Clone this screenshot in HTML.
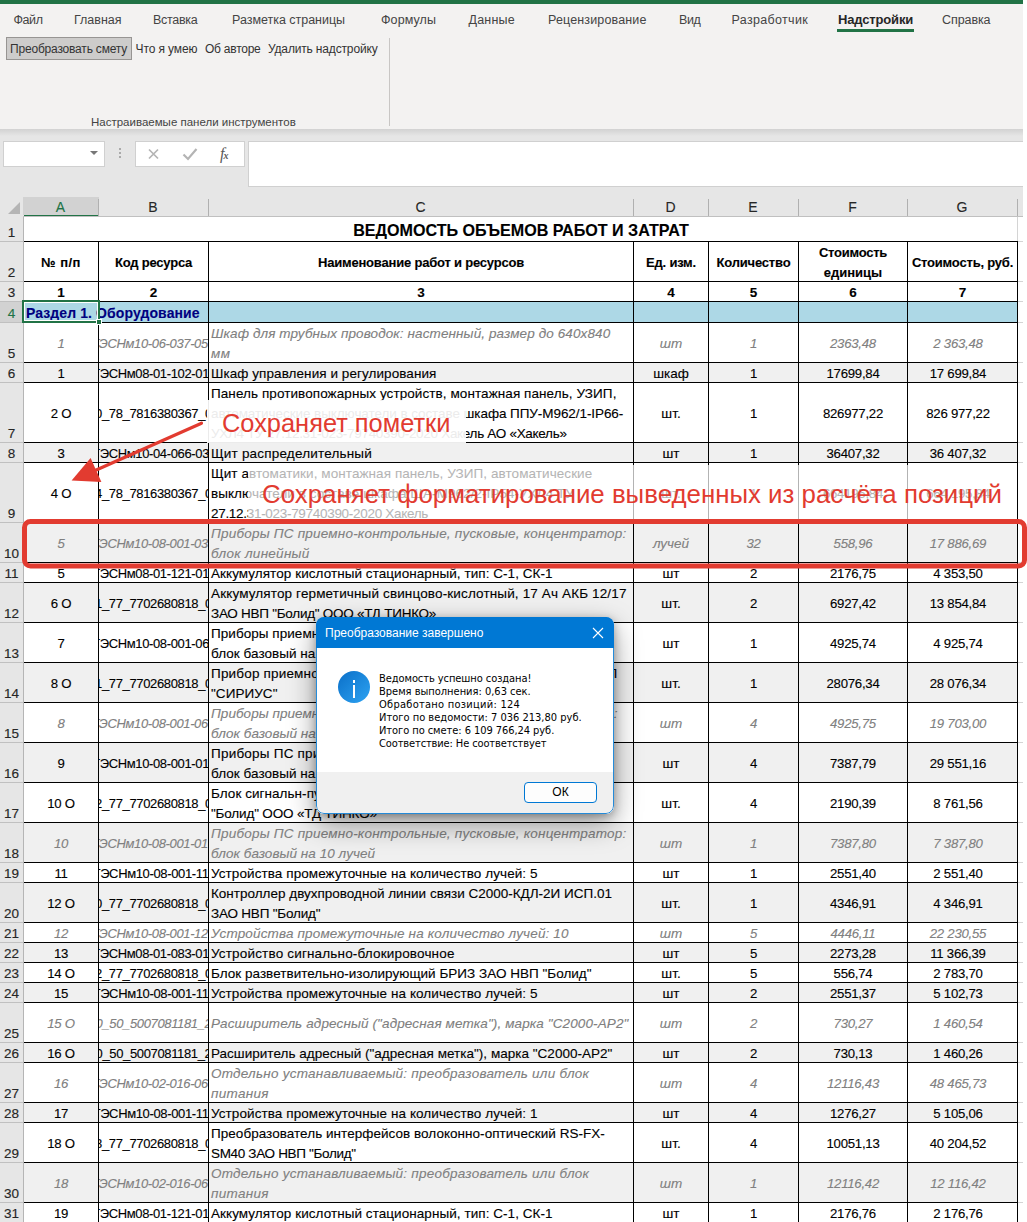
<!DOCTYPE html>
<html lang="ru"><head><meta charset="utf-8"><title>Ведомость объемов работ и затрат</title>
<style>
*{box-sizing:border-box;margin:0;padding:0}
html,body{width:1027px;height:1222px;overflow:hidden;background:#fff}
body{position:relative;font-family:"Liberation Sans",sans-serif;font-size:13.5px;color:#000}
.abs{position:absolute}
.t{position:absolute;white-space:nowrap;line-height:20px;height:20px;-webkit-text-stroke:0.12px}
.c{text-align:center}
.g{color:#808080;font-style:italic}
.b{font-weight:bold}
.rh{position:absolute;left:0;width:23px;text-align:center;font-size:13.5px;color:#1a1a1a;line-height:18px;-webkit-text-stroke:0.15px}
.ch{position:absolute;top:198px;height:18px;line-height:19px;text-align:center;font-size:14px;color:#1a1a1a;-webkit-text-stroke:0.1px}
.hl{position:absolute;background:#000;height:1px}
.vl{position:absolute;background:#000;width:1px}
.num{font-size:13.2px;letter-spacing:-0.25px}
.tab{position:absolute;top:10px;height:20px;line-height:20px;font-size:13px;color:#444;white-space:nowrap}
.rb{position:absolute;top:39px;height:20px;line-height:20px;font-size:12.5px;color:#333;white-space:nowrap}
</style></head><body>

<div class="abs" style="left:0;top:0;width:1027px;height:130px;background:#f3f2f1"></div>
<div class="abs" style="left:0;top:0;width:1027px;height:4px;background:#217346"></div>
<div class="abs" style="left:0;top:130px;width:1027px;height:68px;background:#e6e6e6"></div>
<div class="abs" style="left:0;top:129px;width:1027px;height:7px;background:linear-gradient(#d2d2d2,#e6e6e6)"></div>
<div class="tab" style="left:13.5px;font-size:12.5px;letter-spacing:-0.43px">Файл</div>
<div class="tab" style="left:74px;font-size:12.5px;letter-spacing:-0.01px">Главная</div>
<div class="tab" style="left:153px;font-size:12.5px;letter-spacing:-0.28px">Вставка</div>
<div class="tab" style="left:232px;font-size:12.5px;letter-spacing:-0.02px">Разметка страницы</div>
<div class="tab" style="left:381px;font-size:12.5px;letter-spacing:0.09px">Формулы</div>
<div class="tab" style="left:468.5px;font-size:12.5px;letter-spacing:0.22px">Данные</div>
<div class="tab" style="left:548px;font-size:12.5px;letter-spacing:0.14px">Рецензирование</div>
<div class="tab" style="left:679px;font-size:12.5px;letter-spacing:-0.38px">Вид</div>
<div class="tab" style="left:731.5px;font-size:12.5px;letter-spacing:0.33px">Разработчик</div>
<div class="tab b" style="left:838px;color:#262626;font-size:13px;letter-spacing:-0.16px">Надстройки</div>
<div class="abs" style="left:837px;top:29px;width:77px;height:3px;background:#217346"></div>
<div class="tab" style="left:942px;font-size:12.5px;letter-spacing:-0.08px">Справка</div>
<div class="abs" style="left:6px;top:37px;width:126px;height:23px;background:#cdcccb;border:1px solid #979593"></div>
<div class="rb" style="left:10px;font-size:12px;letter-spacing:-0.19px">Преобразовать смету</div>
<div class="rb" style="left:135.5px;font-size:12px;letter-spacing:-0.10px">Что я умею</div>
<div class="rb" style="left:205px;font-size:12px;letter-spacing:-0.24px">Об авторе</div>
<div class="rb" style="left:268px;font-size:12px;letter-spacing:-0.16px">Удалить надстройку</div>
<div class="abs" style="left:91px;top:113px;height:18px;line-height:18px;font-size:11.5px;color:#444;white-space:nowrap">Настраиваемые панели инструментов</div>
<div class="abs" style="left:389px;top:38px;width:1px;height:88px;background:#c8c6c4"></div>
<div class="abs" style="left:3px;top:141px;width:102px;height:26px;background:#fff;border:1px solid #d0d0d0"></div>
<div class="abs" style="left:90px;top:151px;width:0;height:0;border-left:4px solid transparent;border-right:4px solid transparent;border-top:4px solid #777"></div>
<div class="abs" style="left:119px;top:148px;width:2px;height:2px;background:#aaa;box-shadow:0 4px 0 #aaa,0 8px 0 #aaa"></div>
<div class="abs" style="left:135px;top:141px;width:110px;height:26px;background:#fff;border:1px solid #d0d0d0"></div>
<svg class="abs" style="left:135px;top:141px" width="110" height="25" viewBox="0 0 110 25"><path d="M14 8.5l9 9M23 8.5l-9 9" stroke="#b4b4b4" stroke-width="1.7" fill="none"/><path d="M48.5 13.5l4.5 4.5 8.5-10" stroke="#b4b4b4" stroke-width="2.2" fill="none"/><text x="85" y="18" font-family="Liberation Serif,serif" font-style="italic" font-size="16" fill="#5a5a5a">f<tspan font-size="10" dx="-1" font-weight="bold">x</tspan></text></svg>
<div class="abs" style="left:248px;top:141px;width:780px;height:46px;background:#fff;border:1px solid #d0d0d0"></div>
<div class="abs" style="left:0;top:197px;width:1027px;height:20px;background:#e6e6e6"></div>
<div class="abs" style="left:8px;top:202px;width:0;height:0;border-left:12px solid transparent;border-bottom:12px solid #b5b5b5"></div>
<div class="abs" style="left:23px;top:197px;width:76px;height:18px;background:#d2d2d2"></div>
<div class="abs" style="left:24px;top:215px;width:75px;height:2px;background:#217346"></div>
<div class="ch" style="left:23px;width:75px;color:#217346">A</div>
<div class="abs" style="left:98px;top:199px;width:1px;height:17px;background:#b0b0b0"></div>
<div class="ch" style="left:98px;width:110px;color:#262626">B</div>
<div class="abs" style="left:208px;top:199px;width:1px;height:17px;background:#b0b0b0"></div>
<div class="ch" style="left:208px;width:425px;color:#262626">C</div>
<div class="abs" style="left:633px;top:199px;width:1px;height:17px;background:#b0b0b0"></div>
<div class="ch" style="left:633px;width:75px;color:#262626">D</div>
<div class="abs" style="left:708px;top:199px;width:1px;height:17px;background:#b0b0b0"></div>
<div class="ch" style="left:708px;width:90px;color:#262626">E</div>
<div class="abs" style="left:798px;top:199px;width:1px;height:17px;background:#b0b0b0"></div>
<div class="ch" style="left:798px;width:109px;color:#262626">F</div>
<div class="abs" style="left:907px;top:199px;width:1px;height:17px;background:#b0b0b0"></div>
<div class="ch" style="left:907px;width:110px;color:#262626">G</div>
<div class="abs" style="left:1017px;top:199px;width:1px;height:17px;background:#b0b0b0"></div>
<div class="abs" style="left:23px;top:216px;width:1004px;height:1px;background:#c0c0c0"></div>
<div class="abs" style="left:0;top:217px;width:23px;height:1005px;background:#e6e6e6"></div>
<div class="abs" style="left:23px;top:217px;width:1px;height:1005px;background:#b5b5b5"></div>
<div class="abs" style="left:0;top:301px;width:23px;height:21px;background:#d2d2d2"></div>
<div class="abs" style="left:22px;top:301px;width:2px;height:21px;background:#217346"></div>
<div class="rh" style="top:224px;color:#262626">1</div>
<div class="abs" style="left:0;top:241px;width:23px;height:1px;background:#c0c0c0"></div>
<div class="rh" style="top:264px;color:#262626">2</div>
<div class="abs" style="left:0;top:281px;width:23px;height:1px;background:#c0c0c0"></div>
<div class="rh" style="top:284px;color:#262626">3</div>
<div class="abs" style="left:0;top:301px;width:23px;height:1px;background:#c0c0c0"></div>
<div class="rh" style="top:305px;color:#217346">4</div>
<div class="abs" style="left:0;top:322px;width:23px;height:1px;background:#c0c0c0"></div>
<div class="rh" style="top:345px;color:#262626">5</div>
<div class="abs" style="left:0;top:362px;width:23px;height:1px;background:#c0c0c0"></div>
<div class="rh" style="top:365px;color:#262626">6</div>
<div class="abs" style="left:0;top:382px;width:23px;height:1px;background:#c0c0c0"></div>
<div class="rh" style="top:425px;color:#262626">7</div>
<div class="abs" style="left:0;top:442px;width:23px;height:1px;background:#c0c0c0"></div>
<div class="rh" style="top:445px;color:#262626">8</div>
<div class="abs" style="left:0;top:462px;width:23px;height:1px;background:#c0c0c0"></div>
<div class="rh" style="top:505px;color:#262626">9</div>
<div class="abs" style="left:0;top:522px;width:23px;height:1px;background:#c0c0c0"></div>
<div class="rh" style="top:545px;color:#262626">10</div>
<div class="abs" style="left:0;top:562px;width:23px;height:1px;background:#c0c0c0"></div>
<div class="rh" style="top:565px;color:#262626">11</div>
<div class="abs" style="left:0;top:582px;width:23px;height:1px;background:#c0c0c0"></div>
<div class="rh" style="top:605px;color:#262626">12</div>
<div class="abs" style="left:0;top:622px;width:23px;height:1px;background:#c0c0c0"></div>
<div class="rh" style="top:645px;color:#262626">13</div>
<div class="abs" style="left:0;top:662px;width:23px;height:1px;background:#c0c0c0"></div>
<div class="rh" style="top:685px;color:#262626">14</div>
<div class="abs" style="left:0;top:702px;width:23px;height:1px;background:#c0c0c0"></div>
<div class="rh" style="top:725px;color:#262626">15</div>
<div class="abs" style="left:0;top:742px;width:23px;height:1px;background:#c0c0c0"></div>
<div class="rh" style="top:765px;color:#262626">16</div>
<div class="abs" style="left:0;top:782px;width:23px;height:1px;background:#c0c0c0"></div>
<div class="rh" style="top:805px;color:#262626">17</div>
<div class="abs" style="left:0;top:822px;width:23px;height:1px;background:#c0c0c0"></div>
<div class="rh" style="top:845px;color:#262626">18</div>
<div class="abs" style="left:0;top:862px;width:23px;height:1px;background:#c0c0c0"></div>
<div class="rh" style="top:865px;color:#262626">19</div>
<div class="abs" style="left:0;top:882px;width:23px;height:1px;background:#c0c0c0"></div>
<div class="rh" style="top:905px;color:#262626">20</div>
<div class="abs" style="left:0;top:922px;width:23px;height:1px;background:#c0c0c0"></div>
<div class="rh" style="top:925px;color:#262626">21</div>
<div class="abs" style="left:0;top:942px;width:23px;height:1px;background:#c0c0c0"></div>
<div class="rh" style="top:945px;color:#262626">22</div>
<div class="abs" style="left:0;top:962px;width:23px;height:1px;background:#c0c0c0"></div>
<div class="rh" style="top:965px;color:#262626">23</div>
<div class="abs" style="left:0;top:982px;width:23px;height:1px;background:#c0c0c0"></div>
<div class="rh" style="top:985px;color:#262626">24</div>
<div class="abs" style="left:0;top:1002px;width:23px;height:1px;background:#c0c0c0"></div>
<div class="rh" style="top:1025px;color:#262626">25</div>
<div class="abs" style="left:0;top:1042px;width:23px;height:1px;background:#c0c0c0"></div>
<div class="rh" style="top:1045px;color:#262626">26</div>
<div class="abs" style="left:0;top:1062px;width:23px;height:1px;background:#c0c0c0"></div>
<div class="rh" style="top:1085px;color:#262626">27</div>
<div class="abs" style="left:0;top:1102px;width:23px;height:1px;background:#c0c0c0"></div>
<div class="rh" style="top:1105px;color:#262626">28</div>
<div class="abs" style="left:0;top:1122px;width:23px;height:1px;background:#c0c0c0"></div>
<div class="rh" style="top:1145px;color:#262626">29</div>
<div class="abs" style="left:0;top:1162px;width:23px;height:1px;background:#c0c0c0"></div>
<div class="rh" style="top:1185px;color:#262626">30</div>
<div class="abs" style="left:0;top:1202px;width:23px;height:1px;background:#c0c0c0"></div>
<div class="rh" style="top:1205px;color:#262626">31</div>
<div class="abs" style="left:0;top:1222px;width:23px;height:1px;background:#c0c0c0"></div>
<div class="abs" style="left:24px;top:302px;width:994px;height:20px;background:#add8e6"></div>
<div class="abs" style="left:24px;top:363px;width:993px;height:19px;background:#f0f0f0"></div>
<div class="abs" style="left:24px;top:443px;width:993px;height:19px;background:#f0f0f0"></div>
<div class="abs" style="left:24px;top:523px;width:993px;height:39px;background:#f0f0f0"></div>
<div class="abs" style="left:24px;top:583px;width:993px;height:39px;background:#f0f0f0"></div>
<div class="abs" style="left:24px;top:663px;width:993px;height:39px;background:#f0f0f0"></div>
<div class="abs" style="left:24px;top:743px;width:993px;height:39px;background:#f0f0f0"></div>
<div class="abs" style="left:24px;top:823px;width:993px;height:39px;background:#f0f0f0"></div>
<div class="abs" style="left:24px;top:883px;width:993px;height:39px;background:#f0f0f0"></div>
<div class="abs" style="left:24px;top:943px;width:993px;height:19px;background:#f0f0f0"></div>
<div class="abs" style="left:24px;top:983px;width:993px;height:19px;background:#f0f0f0"></div>
<div class="abs" style="left:24px;top:1043px;width:993px;height:19px;background:#f0f0f0"></div>
<div class="abs" style="left:24px;top:1103px;width:993px;height:19px;background:#f0f0f0"></div>
<div class="abs" style="left:24px;top:1163px;width:993px;height:39px;background:#f0f0f0"></div>
<div class="t c b" style="left:24px;width:994px;top:220px;font-size:16.1px;letter-spacing:0">ВЕДОМОСТЬ ОБЪЕМОВ РАБОТ И ЗАТРАТ</div>
<div class="t c b" style="left:24px;width:74px;top:253px;font-size:13px;letter-spacing:0.50px">№ п/п</div>
<div class="t c b" style="left:99px;width:109px;top:253px;font-size:13px;letter-spacing:-0.20px">Код ресурса</div>
<div class="t c b" style="left:209px;width:424px;top:253px;font-size:13px;letter-spacing:-0.20px">Наименование работ и ресурсов</div>
<div class="t c b" style="left:634px;width:74px;top:253px;font-size:13px;letter-spacing:-0.20px">Ед. изм.</div>
<div class="t c b" style="left:709px;width:89px;top:253px;font-size:13px;letter-spacing:-0.20px">Количество</div>
<div class="t c b" style="left:908px;width:109px;top:253px;font-size:13px;letter-spacing:-0.20px">Стоимость, руб.</div>
<div class="t c b" style="left:799px;width:108px;top:243px;font-size:13px;letter-spacing:-0.24px">Стоимость</div>
<div class="t c b" style="left:799px;width:108px;top:263px;font-size:13px">единицы</div>
<div class="t c b" style="left:24px;width:74px;top:283px;">1</div>
<div class="t c b" style="left:99px;width:109px;top:283px;">2</div>
<div class="t c b" style="left:209px;width:424px;top:283px;">3</div>
<div class="t c b" style="left:634px;width:74px;top:283px;">4</div>
<div class="t c b" style="left:709px;width:89px;top:283px;">5</div>
<div class="t c b" style="left:799px;width:108px;top:283px;">6</div>
<div class="t c b" style="left:908px;width:109px;top:283px;">7</div>
<div class="t b" style="left:26px;top:303px;color:#000080;font-size:14px;letter-spacing:0.1px">Раздел 1. Оборудование</div>
<div class="t c g num" style="left:24px;width:74px;top:334px;">1</div>
<div class="abs" style="left:99px;width:109px;top:334px;height:20px;overflow:hidden"><div class="t g" style="left:-48.5px;width:199px;text-align:center;font-size:13px;letter-spacing:-0.36px">ГЭСНм10-06-037-05</div></div>
<div class="t g" style="left:211px;top:324px;letter-spacing:0.11px">Шкаф для трубных проводок: настенный, размер до 640х840</div>
<div class="t g" style="left:211px;top:344px;letter-spacing:0.40px">мм</div>
<div class="t c g" style="left:634px;width:74px;top:334px;">шт</div>
<div class="t c g num" style="left:709px;width:89px;top:334px;">1</div>
<div class="t c g num" style="left:799px;width:108px;top:334px;">2363,48</div>
<div class="t c g num" style="left:899px;width:118px;top:334px;">2 363,48</div>
<div class="t c  num" style="left:24px;width:74px;top:364px;">1</div>
<div class="abs" style="left:99px;width:109px;top:364px;height:20px;overflow:hidden"><div class="t " style="left:-47.5px;width:199px;text-align:center;font-size:13px;letter-spacing:-0.36px">ГЭСНм08-01-102-01</div></div>
<div class="t " style="left:211px;top:364px;letter-spacing:0.07px">Шкаф управления и регулирования</div>
<div class="t c " style="left:634px;width:74px;top:364px;">шкаф</div>
<div class="t c  num" style="left:709px;width:89px;top:364px;">1</div>
<div class="t c  num" style="left:799px;width:108px;top:364px;">17699,84</div>
<div class="t c  num" style="left:899px;width:118px;top:364px;">17 699,84</div>
<div class="t c  num" style="left:24px;width:74px;top:404px;">2 О</div>
<div class="abs" style="left:99px;width:109px;top:404px;height:20px;overflow:hidden"><div class="t " style="left:-45px;width:199px;text-align:center;font-size:13px;letter-spacing:-0.36px">0_78_7816380367_0</div></div>
<div class="t " style="left:211px;top:384px;letter-spacing:0.08px">Панель противопожарных устройств, монтажная панель, УЗИП,</div>
<div class="t " style="left:211px;top:404px;letter-spacing:-0.07px">автоматические выключатели в составе шкафа ППУ-М962/1-IP66-</div>
<div class="t " style="left:211px;top:424px;letter-spacing:-0.30px">УХЛ4 ТУ 27.12.31-023-79740390-2020 Хакель АО «Хакель»</div>
<div class="t c " style="left:634px;width:74px;top:404px;">шт.</div>
<div class="t c  num" style="left:709px;width:89px;top:404px;">1</div>
<div class="t c  num" style="left:799px;width:108px;top:404px;">826977,22</div>
<div class="t c  num" style="left:899px;width:118px;top:404px;">826 977,22</div>
<div class="t c  num" style="left:24px;width:74px;top:444px;">3</div>
<div class="abs" style="left:99px;width:109px;top:444px;height:20px;overflow:hidden"><div class="t " style="left:-47.5px;width:199px;text-align:center;font-size:13px;letter-spacing:-0.36px">ГЭСНм10-04-066-03</div></div>
<div class="t " style="left:211px;top:444px;letter-spacing:0.19px">Щит распределительный</div>
<div class="t c " style="left:634px;width:74px;top:444px;">шт</div>
<div class="t c  num" style="left:709px;width:89px;top:444px;">1</div>
<div class="t c  num" style="left:799px;width:108px;top:444px;">36407,32</div>
<div class="t c  num" style="left:899px;width:118px;top:444px;">36 407,32</div>
<div class="t c  num" style="left:24px;width:74px;top:484px;">4 О</div>
<div class="abs" style="left:99px;width:109px;top:484px;height:20px;overflow:hidden"><div class="t " style="left:-45px;width:199px;text-align:center;font-size:13px;letter-spacing:-0.36px">4_78_7816380367_0</div></div>
<div class="t " style="left:211px;top:464px;letter-spacing:0.07px">Щит автоматики, монтажная панель, УЗИП, автоматические</div>
<div class="t " style="left:211px;top:484px;letter-spacing:0.05px">выключатели в составе шкафа ЩА-М962/2-IP54-УХЛ4 ТУ</div>
<div class="t " style="left:211px;top:504px;letter-spacing:-0.30px">27.12.31-023-79740390-2020 Хакель</div>
<div class="t c " style="left:634px;width:74px;top:484px;">шт.</div>
<div class="t c  num" style="left:709px;width:89px;top:484px;">1</div>
<div class="t c  num" style="left:799px;width:108px;top:484px;">664195,84</div>
<div class="t c  num" style="left:899px;width:118px;top:484px;">664 195,84</div>
<div class="t c g num" style="left:24px;width:74px;top:534px;">5</div>
<div class="abs" style="left:99px;width:109px;top:534px;height:20px;overflow:hidden"><div class="t g" style="left:-48.5px;width:199px;text-align:center;font-size:13px;letter-spacing:-0.36px">ГЭСНм10-08-001-03</div></div>
<div class="t g" style="left:211px;top:524px;letter-spacing:0.21px">Приборы ПС приемно-контрольные, пусковые, концентратор:</div>
<div class="t g" style="left:211px;top:544px;letter-spacing:0.28px">блок линейный</div>
<div class="t c g" style="left:634px;width:74px;top:534px;">лучей</div>
<div class="t c g num" style="left:709px;width:89px;top:534px;">32</div>
<div class="t c g num" style="left:799px;width:108px;top:534px;">558,96</div>
<div class="t c g num" style="left:899px;width:118px;top:534px;">17 886,69</div>
<div class="t c  num" style="left:24px;width:74px;top:564px;">5</div>
<div class="abs" style="left:99px;width:109px;top:564px;height:20px;overflow:hidden"><div class="t " style="left:-47.5px;width:199px;text-align:center;font-size:13px;letter-spacing:-0.36px">ГЭСНм08-01-121-01</div></div>
<div class="t " style="left:211px;top:564px;letter-spacing:0.06px">Аккумулятор кислотный стационарный, тип: С-1, СК-1</div>
<div class="t c " style="left:634px;width:74px;top:564px;">шт</div>
<div class="t c  num" style="left:709px;width:89px;top:564px;">2</div>
<div class="t c  num" style="left:799px;width:108px;top:564px;">2176,75</div>
<div class="t c  num" style="left:899px;width:118px;top:564px;">4 353,50</div>
<div class="t c  num" style="left:24px;width:74px;top:594px;">6 О</div>
<div class="abs" style="left:99px;width:109px;top:594px;height:20px;overflow:hidden"><div class="t " style="left:-45px;width:199px;text-align:center;font-size:13px;letter-spacing:-0.36px">1_77_7702680818_0</div></div>
<div class="t " style="left:211px;top:584px;letter-spacing:0.14px">Аккумулятор герметичный свинцово-кислотный, 17 Ач АКБ 12/17</div>
<div class="t " style="left:211px;top:604px;letter-spacing:-0.26px">ЗАО НВП &quot;Болид&quot; ООО «ТД ТИНКО»</div>
<div class="t c " style="left:634px;width:74px;top:594px;">шт.</div>
<div class="t c  num" style="left:709px;width:89px;top:594px;">2</div>
<div class="t c  num" style="left:799px;width:108px;top:594px;">6927,42</div>
<div class="t c  num" style="left:899px;width:118px;top:594px;">13 854,84</div>
<div class="t c  num" style="left:24px;width:74px;top:634px;">7</div>
<div class="abs" style="left:99px;width:109px;top:634px;height:20px;overflow:hidden"><div class="t " style="left:-47.5px;width:199px;text-align:center;font-size:13px;letter-spacing:-0.36px">ГЭСНм10-08-001-06</div></div>
<div class="t " style="left:211px;top:624px;letter-spacing:0.05px">Приборы приемно-контрольные, пусковые, концентратор:</div>
<div class="t " style="left:211px;top:644px;letter-spacing:0.04px">блок базовый на 10 лучей</div>
<div class="t c " style="left:634px;width:74px;top:634px;">шт</div>
<div class="t c  num" style="left:709px;width:89px;top:634px;">1</div>
<div class="t c  num" style="left:799px;width:108px;top:634px;">4925,74</div>
<div class="t c  num" style="left:899px;width:118px;top:634px;">4 925,74</div>
<div class="t c  num" style="left:24px;width:74px;top:674px;">8 О</div>
<div class="abs" style="left:99px;width:109px;top:674px;height:20px;overflow:hidden"><div class="t " style="left:-45px;width:199px;text-align:center;font-size:13px;letter-spacing:-0.36px">1_77_7702680818_0</div></div>
<div class="t " style="left:211px;top:664px;letter-spacing:0.18px">Прибор приемно-контрольный и управления пожарный ППКУП</div>
<div class="t " style="left:211px;top:684px;letter-spacing:0.05px">&quot;СИРИУС&quot;</div>
<div class="t c " style="left:634px;width:74px;top:674px;">шт.</div>
<div class="t c  num" style="left:709px;width:89px;top:674px;">1</div>
<div class="t c  num" style="left:799px;width:108px;top:674px;">28076,34</div>
<div class="t c  num" style="left:899px;width:118px;top:674px;">28 076,34</div>
<div class="t c g num" style="left:24px;width:74px;top:714px;">8</div>
<div class="abs" style="left:99px;width:109px;top:714px;height:20px;overflow:hidden"><div class="t g" style="left:-48.5px;width:199px;text-align:center;font-size:13px;letter-spacing:-0.36px">ГЭСНм10-08-001-06</div></div>
<div class="t g" style="left:211px;top:704px;letter-spacing:0.05px">Приборы приемно-контрольные ПС, пусковые, концентратор:</div>
<div class="t g" style="left:211px;top:724px;letter-spacing:0.05px">блок базовый на 10 лучей</div>
<div class="t c g" style="left:634px;width:74px;top:714px;">шт</div>
<div class="t c g num" style="left:709px;width:89px;top:714px;">4</div>
<div class="t c g num" style="left:799px;width:108px;top:714px;">4925,75</div>
<div class="t c g num" style="left:899px;width:118px;top:714px;">19 703,00</div>
<div class="t c  num" style="left:24px;width:74px;top:754px;">9</div>
<div class="abs" style="left:99px;width:109px;top:754px;height:20px;overflow:hidden"><div class="t " style="left:-47.5px;width:199px;text-align:center;font-size:13px;letter-spacing:-0.36px">ГЭСНм10-08-001-01</div></div>
<div class="t " style="left:211px;top:744px;letter-spacing:0.22px">Приборы ПС приемно-контрольные, пусковые, концентратор:</div>
<div class="t " style="left:211px;top:764px;letter-spacing:0.04px">блок базовый на 10 лучей</div>
<div class="t c " style="left:634px;width:74px;top:754px;">шт</div>
<div class="t c  num" style="left:709px;width:89px;top:754px;">4</div>
<div class="t c  num" style="left:799px;width:108px;top:754px;">7387,79</div>
<div class="t c  num" style="left:899px;width:118px;top:754px;">29 551,16</div>
<div class="t c  num" style="left:24px;width:74px;top:794px;">10 О</div>
<div class="abs" style="left:99px;width:109px;top:794px;height:20px;overflow:hidden"><div class="t " style="left:-45px;width:199px;text-align:center;font-size:13px;letter-spacing:-0.36px">2_77_7702680818_0</div></div>
<div class="t " style="left:211px;top:784px;letter-spacing:0.05px">Блок сигнальн-пусковой С2000-СП1 исп.01 ЗАО НВП</div>
<div class="t " style="left:211px;top:804px;letter-spacing:-0.17px">&quot;Болид&quot; ООО «ТД ТИНКО»</div>
<div class="t c " style="left:634px;width:74px;top:794px;">шт.</div>
<div class="t c  num" style="left:709px;width:89px;top:794px;">4</div>
<div class="t c  num" style="left:799px;width:108px;top:794px;">2190,39</div>
<div class="t c  num" style="left:899px;width:118px;top:794px;">8 761,56</div>
<div class="t c g num" style="left:24px;width:74px;top:834px;">10</div>
<div class="abs" style="left:99px;width:109px;top:834px;height:20px;overflow:hidden"><div class="t g" style="left:-48.5px;width:199px;text-align:center;font-size:13px;letter-spacing:-0.36px">ГЭСНм10-08-001-01</div></div>
<div class="t g" style="left:211px;top:824px;letter-spacing:0.21px">Приборы ПС приемно-контрольные, пусковые, концентратор:</div>
<div class="t g" style="left:211px;top:844px;letter-spacing:0.05px">блок базовый на 10 лучей</div>
<div class="t c g" style="left:634px;width:74px;top:834px;">шт</div>
<div class="t c g num" style="left:709px;width:89px;top:834px;">1</div>
<div class="t c g num" style="left:799px;width:108px;top:834px;">7387,80</div>
<div class="t c g num" style="left:899px;width:118px;top:834px;">7 387,80</div>
<div class="t c  num" style="left:24px;width:74px;top:864px;">11</div>
<div class="abs" style="left:99px;width:109px;top:864px;height:20px;overflow:hidden"><div class="t " style="left:-47.5px;width:199px;text-align:center;font-size:13px;letter-spacing:-0.36px">ГЭСНм10-08-001-11</div></div>
<div class="t " style="left:211px;top:864px;letter-spacing:0.08px">Устройства промежуточные на количество лучей: 5</div>
<div class="t c " style="left:634px;width:74px;top:864px;">шт</div>
<div class="t c  num" style="left:709px;width:89px;top:864px;">1</div>
<div class="t c  num" style="left:799px;width:108px;top:864px;">2551,40</div>
<div class="t c  num" style="left:899px;width:118px;top:864px;">2 551,40</div>
<div class="t c  num" style="left:24px;width:74px;top:894px;">12 О</div>
<div class="abs" style="left:99px;width:109px;top:894px;height:20px;overflow:hidden"><div class="t " style="left:-45px;width:199px;text-align:center;font-size:13px;letter-spacing:-0.36px">0_77_7702680818_0</div></div>
<div class="t " style="left:211px;top:884px;letter-spacing:-0.00px">Контроллер двухпроводной линии связи С2000-КДЛ-2И ИСП.01</div>
<div class="t " style="left:211px;top:904px;letter-spacing:-0.20px">ЗАО НВП &quot;Болид&quot;</div>
<div class="t c " style="left:634px;width:74px;top:894px;">шт.</div>
<div class="t c  num" style="left:709px;width:89px;top:894px;">1</div>
<div class="t c  num" style="left:799px;width:108px;top:894px;">4346,91</div>
<div class="t c  num" style="left:899px;width:118px;top:894px;">4 346,91</div>
<div class="t c g num" style="left:24px;width:74px;top:924px;">12</div>
<div class="abs" style="left:99px;width:109px;top:924px;height:20px;overflow:hidden"><div class="t g" style="left:-48.5px;width:199px;text-align:center;font-size:13px;letter-spacing:-0.36px">ГЭСНм10-08-001-12</div></div>
<div class="t g" style="left:211px;top:924px;letter-spacing:0.16px">Устройства промежуточные на количество лучей: 10</div>
<div class="t c g" style="left:634px;width:74px;top:924px;">шт</div>
<div class="t c g num" style="left:709px;width:89px;top:924px;">5</div>
<div class="t c g num" style="left:799px;width:108px;top:924px;">4446,11</div>
<div class="t c g num" style="left:899px;width:118px;top:924px;">22 230,55</div>
<div class="t c  num" style="left:24px;width:74px;top:944px;">13</div>
<div class="abs" style="left:99px;width:109px;top:944px;height:20px;overflow:hidden"><div class="t " style="left:-47.5px;width:199px;text-align:center;font-size:13px;letter-spacing:-0.36px">ГЭСНм08-01-083-01</div></div>
<div class="t " style="left:211px;top:944px;letter-spacing:0.17px">Устройство сигнально-блокировочное</div>
<div class="t c " style="left:634px;width:74px;top:944px;">шт</div>
<div class="t c  num" style="left:709px;width:89px;top:944px;">5</div>
<div class="t c  num" style="left:799px;width:108px;top:944px;">2273,28</div>
<div class="t c  num" style="left:899px;width:118px;top:944px;">11 366,39</div>
<div class="t c  num" style="left:24px;width:74px;top:964px;">14 О</div>
<div class="abs" style="left:99px;width:109px;top:964px;height:20px;overflow:hidden"><div class="t " style="left:-45px;width:199px;text-align:center;font-size:13px;letter-spacing:-0.36px">2_77_7702680818_0</div></div>
<div class="t " style="left:211px;top:964px;letter-spacing:0.02px">Блок разветвительно-изолирующий БРИЗ ЗАО НВП &quot;Болид&quot;</div>
<div class="t c " style="left:634px;width:74px;top:964px;">шт.</div>
<div class="t c  num" style="left:709px;width:89px;top:964px;">5</div>
<div class="t c  num" style="left:799px;width:108px;top:964px;">556,74</div>
<div class="t c  num" style="left:899px;width:118px;top:964px;">2 783,70</div>
<div class="t c  num" style="left:24px;width:74px;top:984px;">15</div>
<div class="abs" style="left:99px;width:109px;top:984px;height:20px;overflow:hidden"><div class="t " style="left:-47.5px;width:199px;text-align:center;font-size:13px;letter-spacing:-0.36px">ГЭСНм10-08-001-11</div></div>
<div class="t " style="left:211px;top:984px;letter-spacing:0.08px">Устройства промежуточные на количество лучей: 5</div>
<div class="t c " style="left:634px;width:74px;top:984px;">шт</div>
<div class="t c  num" style="left:709px;width:89px;top:984px;">2</div>
<div class="t c  num" style="left:799px;width:108px;top:984px;">2551,37</div>
<div class="t c  num" style="left:899px;width:118px;top:984px;">5 102,73</div>
<div class="t c g num" style="left:24px;width:74px;top:1014px;">15 О</div>
<div class="abs" style="left:99px;width:109px;top:1014px;height:20px;overflow:hidden"><div class="t g" style="left:-45px;width:199px;text-align:center;font-size:13px;letter-spacing:-0.36px">0_50_5007081181_2</div></div>
<div class="t g" style="left:211px;top:1014px;letter-spacing:0.12px">Расширитель адресный (&quot;адресная метка&quot;), марка &quot;С2000-АР2&quot;</div>
<div class="t c g" style="left:634px;width:74px;top:1014px;">шт</div>
<div class="t c g num" style="left:709px;width:89px;top:1014px;">2</div>
<div class="t c g num" style="left:799px;width:108px;top:1014px;">730,27</div>
<div class="t c g num" style="left:899px;width:118px;top:1014px;">1 460,54</div>
<div class="t c  num" style="left:24px;width:74px;top:1044px;">16 О</div>
<div class="abs" style="left:99px;width:109px;top:1044px;height:20px;overflow:hidden"><div class="t " style="left:-45px;width:199px;text-align:center;font-size:13px;letter-spacing:-0.36px">0_50_5007081181_2</div></div>
<div class="t " style="left:211px;top:1044px;letter-spacing:0.02px">Расширитель адресный (&quot;адресная метка&quot;), марка &quot;С2000-АР2&quot;</div>
<div class="t c " style="left:634px;width:74px;top:1044px;">шт</div>
<div class="t c  num" style="left:709px;width:89px;top:1044px;">2</div>
<div class="t c  num" style="left:799px;width:108px;top:1044px;">730,13</div>
<div class="t c  num" style="left:899px;width:118px;top:1044px;">1 460,26</div>
<div class="t c g num" style="left:24px;width:74px;top:1074px;">16</div>
<div class="abs" style="left:99px;width:109px;top:1074px;height:20px;overflow:hidden"><div class="t g" style="left:-48.5px;width:199px;text-align:center;font-size:13px;letter-spacing:-0.36px">ГЭСНм10-02-016-06</div></div>
<div class="t g" style="left:211px;top:1064px;letter-spacing:0.24px">Отдельно устанавливаемый: преобразователь или блок</div>
<div class="t g" style="left:211px;top:1084px;letter-spacing:0.31px">питания</div>
<div class="t c g" style="left:634px;width:74px;top:1074px;">шт</div>
<div class="t c g num" style="left:709px;width:89px;top:1074px;">4</div>
<div class="t c g num" style="left:799px;width:108px;top:1074px;">12116,43</div>
<div class="t c g num" style="left:899px;width:118px;top:1074px;">48 465,73</div>
<div class="t c  num" style="left:24px;width:74px;top:1104px;">17</div>
<div class="abs" style="left:99px;width:109px;top:1104px;height:20px;overflow:hidden"><div class="t " style="left:-47.5px;width:199px;text-align:center;font-size:13px;letter-spacing:-0.36px">ГЭСНм10-08-001-11</div></div>
<div class="t " style="left:211px;top:1104px;letter-spacing:0.08px">Устройства промежуточные на количество лучей: 1</div>
<div class="t c " style="left:634px;width:74px;top:1104px;">шт</div>
<div class="t c  num" style="left:709px;width:89px;top:1104px;">4</div>
<div class="t c  num" style="left:799px;width:108px;top:1104px;">1276,27</div>
<div class="t c  num" style="left:899px;width:118px;top:1104px;">5 105,06</div>
<div class="t c  num" style="left:24px;width:74px;top:1134px;">18 О</div>
<div class="abs" style="left:99px;width:109px;top:1134px;height:20px;overflow:hidden"><div class="t " style="left:-45px;width:199px;text-align:center;font-size:13px;letter-spacing:-0.36px">8_77_7702680818_0</div></div>
<div class="t " style="left:211px;top:1124px;letter-spacing:0.04px">Преобразователь интерфейсов волоконно-оптический RS-FX-</div>
<div class="t " style="left:211px;top:1144px;letter-spacing:-0.33px">SM40 ЗАО НВП &quot;Болид&quot;</div>
<div class="t c " style="left:634px;width:74px;top:1134px;">шт.</div>
<div class="t c  num" style="left:709px;width:89px;top:1134px;">4</div>
<div class="t c  num" style="left:799px;width:108px;top:1134px;">10051,13</div>
<div class="t c  num" style="left:899px;width:118px;top:1134px;">40 204,52</div>
<div class="t c g num" style="left:24px;width:74px;top:1174px;">18</div>
<div class="abs" style="left:99px;width:109px;top:1174px;height:20px;overflow:hidden"><div class="t g" style="left:-48.5px;width:199px;text-align:center;font-size:13px;letter-spacing:-0.36px">ГЭСНм10-02-016-06</div></div>
<div class="t g" style="left:211px;top:1164px;letter-spacing:0.24px">Отдельно устанавливаемый: преобразователь или блок</div>
<div class="t g" style="left:211px;top:1184px;letter-spacing:0.31px">питания</div>
<div class="t c g" style="left:634px;width:74px;top:1174px;">шт</div>
<div class="t c g num" style="left:709px;width:89px;top:1174px;">1</div>
<div class="t c g num" style="left:799px;width:108px;top:1174px;">12116,42</div>
<div class="t c g num" style="left:899px;width:118px;top:1174px;">12 116,42</div>
<div class="t c  num" style="left:24px;width:74px;top:1204px;">19</div>
<div class="abs" style="left:99px;width:109px;top:1204px;height:20px;overflow:hidden"><div class="t " style="left:-47.5px;width:199px;text-align:center;font-size:13px;letter-spacing:-0.36px">ГЭСНм08-01-121-01</div></div>
<div class="t " style="left:211px;top:1204px;letter-spacing:0.06px">Аккумулятор кислотный стационарный, тип: С-1, СК-1</div>
<div class="t c " style="left:634px;width:74px;top:1204px;">шт</div>
<div class="t c  num" style="left:709px;width:89px;top:1204px;">1</div>
<div class="t c  num" style="left:799px;width:108px;top:1204px;">2176,76</div>
<div class="t c  num" style="left:899px;width:118px;top:1204px;">2 176,76</div>
<div class="hl" style="left:24px;top:241px;width:994px"></div>
<div class="hl" style="left:24px;top:281px;width:994px"></div>
<div class="hl" style="left:24px;top:301px;width:994px"></div>
<div class="hl" style="left:24px;top:322px;width:994px"></div>
<div class="hl" style="left:24px;top:362px;width:994px"></div>
<div class="hl" style="left:24px;top:382px;width:994px"></div>
<div class="hl" style="left:24px;top:442px;width:994px"></div>
<div class="hl" style="left:24px;top:462px;width:994px"></div>
<div class="hl" style="left:24px;top:522px;width:994px"></div>
<div class="hl" style="left:24px;top:562px;width:994px"></div>
<div class="hl" style="left:24px;top:582px;width:994px"></div>
<div class="hl" style="left:24px;top:622px;width:994px"></div>
<div class="hl" style="left:24px;top:662px;width:994px"></div>
<div class="hl" style="left:24px;top:702px;width:994px"></div>
<div class="hl" style="left:24px;top:742px;width:994px"></div>
<div class="hl" style="left:24px;top:782px;width:994px"></div>
<div class="hl" style="left:24px;top:822px;width:994px"></div>
<div class="hl" style="left:24px;top:862px;width:994px"></div>
<div class="hl" style="left:24px;top:882px;width:994px"></div>
<div class="hl" style="left:24px;top:922px;width:994px"></div>
<div class="hl" style="left:24px;top:942px;width:994px"></div>
<div class="hl" style="left:24px;top:962px;width:994px"></div>
<div class="hl" style="left:24px;top:982px;width:994px"></div>
<div class="hl" style="left:24px;top:1002px;width:994px"></div>
<div class="hl" style="left:24px;top:1042px;width:994px"></div>
<div class="hl" style="left:24px;top:1062px;width:994px"></div>
<div class="hl" style="left:24px;top:1102px;width:994px"></div>
<div class="hl" style="left:24px;top:1122px;width:994px"></div>
<div class="hl" style="left:24px;top:1162px;width:994px"></div>
<div class="hl" style="left:24px;top:1202px;width:994px"></div>
<div class="hl" style="left:24px;top:1222px;width:994px"></div>
<div class="vl" style="left:98px;top:241px;height:981px"></div>
<div class="vl" style="left:208px;top:241px;height:981px"></div>
<div class="vl" style="left:633px;top:241px;height:981px"></div>
<div class="vl" style="left:708px;top:241px;height:981px"></div>
<div class="vl" style="left:798px;top:241px;height:981px"></div>
<div class="vl" style="left:907px;top:241px;height:981px"></div>
<div class="vl" style="left:1017px;top:241px;height:981px"></div>
<div class="abs" style="left:1018px;top:241px;width:5px;height:1px;background:#d4d4d4"></div>
<div class="abs" style="left:1018px;top:281px;width:5px;height:1px;background:#d4d4d4"></div>
<div class="abs" style="left:1018px;top:301px;width:5px;height:1px;background:#d4d4d4"></div>
<div class="abs" style="left:1018px;top:322px;width:5px;height:1px;background:#d4d4d4"></div>
<div class="abs" style="left:1018px;top:362px;width:5px;height:1px;background:#d4d4d4"></div>
<div class="abs" style="left:1018px;top:382px;width:5px;height:1px;background:#d4d4d4"></div>
<div class="abs" style="left:1018px;top:442px;width:5px;height:1px;background:#d4d4d4"></div>
<div class="abs" style="left:1018px;top:462px;width:5px;height:1px;background:#d4d4d4"></div>
<div class="abs" style="left:1018px;top:522px;width:5px;height:1px;background:#d4d4d4"></div>
<div class="abs" style="left:1018px;top:562px;width:5px;height:1px;background:#d4d4d4"></div>
<div class="abs" style="left:1018px;top:582px;width:5px;height:1px;background:#d4d4d4"></div>
<div class="abs" style="left:1018px;top:622px;width:5px;height:1px;background:#d4d4d4"></div>
<div class="abs" style="left:1018px;top:662px;width:5px;height:1px;background:#d4d4d4"></div>
<div class="abs" style="left:1018px;top:702px;width:5px;height:1px;background:#d4d4d4"></div>
<div class="abs" style="left:1018px;top:742px;width:5px;height:1px;background:#d4d4d4"></div>
<div class="abs" style="left:1018px;top:782px;width:5px;height:1px;background:#d4d4d4"></div>
<div class="abs" style="left:1018px;top:822px;width:5px;height:1px;background:#d4d4d4"></div>
<div class="abs" style="left:1018px;top:862px;width:5px;height:1px;background:#d4d4d4"></div>
<div class="abs" style="left:1018px;top:882px;width:5px;height:1px;background:#d4d4d4"></div>
<div class="abs" style="left:1018px;top:922px;width:5px;height:1px;background:#d4d4d4"></div>
<div class="abs" style="left:1018px;top:942px;width:5px;height:1px;background:#d4d4d4"></div>
<div class="abs" style="left:1018px;top:962px;width:5px;height:1px;background:#d4d4d4"></div>
<div class="abs" style="left:1018px;top:982px;width:5px;height:1px;background:#d4d4d4"></div>
<div class="abs" style="left:1018px;top:1002px;width:5px;height:1px;background:#d4d4d4"></div>
<div class="abs" style="left:1018px;top:1042px;width:5px;height:1px;background:#d4d4d4"></div>
<div class="abs" style="left:1018px;top:1062px;width:5px;height:1px;background:#d4d4d4"></div>
<div class="abs" style="left:1018px;top:1102px;width:5px;height:1px;background:#d4d4d4"></div>
<div class="abs" style="left:1018px;top:1122px;width:5px;height:1px;background:#d4d4d4"></div>
<div class="abs" style="left:1018px;top:1162px;width:5px;height:1px;background:#d4d4d4"></div>
<div class="abs" style="left:1018px;top:1202px;width:5px;height:1px;background:#d4d4d4"></div>
<div class="abs" style="left:1018px;top:1222px;width:5px;height:1px;background:#d4d4d4"></div>
<div class="abs" style="left:1017px;top:217px;width:1px;height:24px;background:#d4d4d4"></div>
<div class="abs" style="left:22px;top:300px;width:78px;height:23px;border:2px solid #217346;box-shadow:inset 0 0 0 1px #fff"></div>
<div class="abs" style="left:96px;top:319px;width:6px;height:6px;background:#217346;border:1px solid #fff"></div>
<div class="abs" style="left:1023px;top:0;width:4px;height:1222px;background:#fff"></div>
<div class="abs" style="left:207px;top:400px;width:259px;height:43px;background:rgba(255,255,255,.92)"></div>
<div class="abs" style="left:222px;top:408px;height:30px;line-height:30px;font-size:25.4px;color:#e23b30;white-space:nowrap">Сохраняет пометки</div>
<div class="abs" style="left:248px;top:465px;width:765px;height:55px;background:rgba(255,255,255,.7)"></div>
<div class="abs" style="left:262px;top:479px;height:30px;line-height:30px;font-size:25.85px;color:#e23b30;white-space:nowrap">Сохраняет форматирование выведенных из расчёта позиций</div>
<svg class="abs" style="left:0;top:0" width="1027" height="1222" viewBox="0 0 1027 1222"><line x1="201.5" y1="423.2" x2="94" y2="471" stroke="#e23b30" stroke-width="3.2" stroke-linecap="round"/><polygon points="71.6,480.6 90.6,458 101.4,482" fill="#e23b30"/><rect x="24.5" y="521.5" width="1000" height="44.5" rx="6" ry="6" fill="none" stroke="#e23b30" stroke-width="5"/></svg>
<div class="abs" style="left:316px;top:617px;width:298px;height:197px;border-radius:8px;background:#fff;box-shadow:0 10px 28px rgba(0,0,0,.4),0 2px 9px rgba(0,0,0,.28);overflow:hidden"><div class="abs" style="left:0;top:0;width:298px;height:31px;background:#0078d4"></div><div class="abs" style="left:9px;top:6px;height:20px;line-height:20px;font-size:12px;color:#fff;white-space:nowrap">Преобразование завершено</div><svg class="abs" style="left:276px;top:10px" width="12" height="12" viewBox="0 0 12 12"><path d="M1 1l10 10M11 1L1 11" stroke="#fff" stroke-width="1.1" fill="none"/></svg><div class="abs" style="left:0;top:155px;width:298px;height:42px;background:#f0f0f0"></div><div class="abs" style="left:22px;top:54px;width:32px;height:32px;border-radius:50%;background:linear-gradient(135deg,#0a6fc8,#2ea3f2)"></div><div class="abs" style="left:37px;top:63px;width:2px;height:3px;background:#fff"></div><div class="abs" style="left:37px;top:68px;width:2px;height:13px;background:#fff"></div><div class="abs" style="left:63px;top:55px;font-family:'DejaVu Sans Condensed','DejaVu Sans','Liberation Sans',sans-serif;font-size:11px;line-height:13px;letter-spacing:-0.07px;color:#000;white-space:nowrap">Ведомость успешно создана!</div><div class="abs" style="left:63px;top:68px;font-family:'DejaVu Sans Condensed','DejaVu Sans','Liberation Sans',sans-serif;font-size:11px;line-height:13px;letter-spacing:-0.01px;color:#000;white-space:nowrap">Время выполнения: 0,63 сек.</div><div class="abs" style="left:63px;top:81px;font-family:'DejaVu Sans Condensed','DejaVu Sans','Liberation Sans',sans-serif;font-size:11px;line-height:13px;letter-spacing:0.26px;color:#000;white-space:nowrap">Обработано позиций: 124</div><div class="abs" style="left:63px;top:94px;font-family:'DejaVu Sans Condensed','DejaVu Sans','Liberation Sans',sans-serif;font-size:11px;line-height:13px;letter-spacing:0.01px;color:#000;white-space:nowrap">Итого по ведомости: 7 036 213,80 руб.</div><div class="abs" style="left:63px;top:107px;font-family:'DejaVu Sans Condensed','DejaVu Sans','Liberation Sans',sans-serif;font-size:11px;line-height:13px;letter-spacing:-0.06px;color:#000;white-space:nowrap">Итого по смете: 6 109 766,24 руб.</div><div class="abs" style="left:63px;top:120px;font-family:'DejaVu Sans Condensed','DejaVu Sans','Liberation Sans',sans-serif;font-size:11px;line-height:13px;letter-spacing:-0.12px;color:#000;white-space:nowrap">Соответствие: Не соответствует</div><div class="abs" style="left:208px;top:165px;width:73px;height:21px;border:1px solid #0078d4;border-radius:4px;background:#fdfdfd;text-align:center;line-height:19px;font-size:12px">ОК</div><div class="abs" style="left:0;top:0;width:298px;height:197px;border:1px solid rgba(0,120,212,.85);border-radius:8px"></div></div>
</body></html>
